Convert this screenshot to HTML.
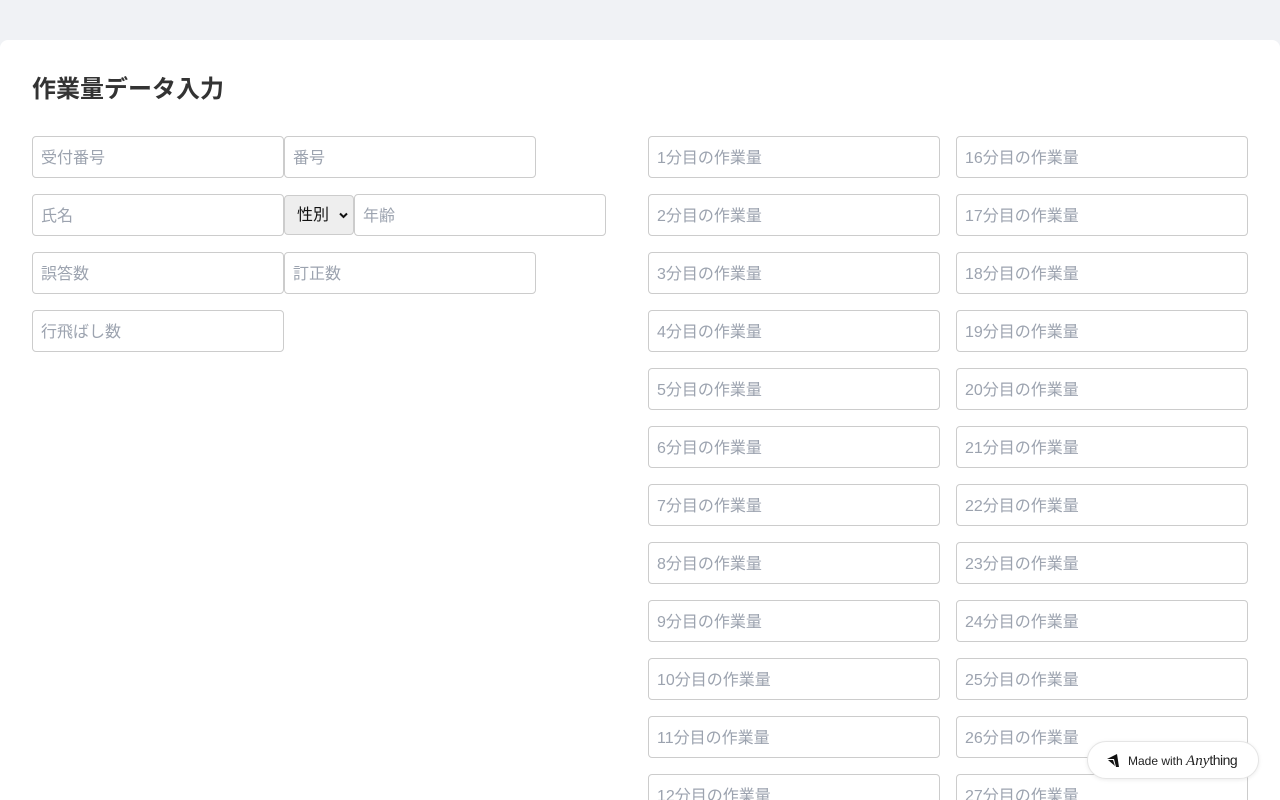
<!DOCTYPE html>
<html><head><meta charset="utf-8"><style>
html,body{margin:0;width:1280px;height:800px;overflow:hidden}
body{background:#f0f2f5;font-family:"Liberation Sans","Noto Sans CJK JP",sans-serif;position:relative}
.card{position:absolute;left:0;top:40px;width:1280px;height:760px;background:#fff;border-radius:8px 8px 0 0}
h1{position:absolute;left:32px;top:73px;margin:0;font-size:24px;font-weight:bold;color:#333;line-height:34px}
.i{position:absolute;box-sizing:border-box;height:42px;border:1px solid #ccc;border-radius:4px;background:#fff;font-size:16px;color:#9ca3af;padding-left:8px;line-height:44px;white-space:nowrap;overflow:hidden}
.s{position:absolute;left:284px;top:195px;width:70px;height:40px;box-sizing:border-box;border:1px solid #ccc;border-radius:4px;background:#eee;font-size:16px;color:#111;line-height:40px;padding-left:12px}
.badge{position:absolute;left:1087px;top:741px;width:172px;height:38px;box-sizing:border-box;border:1px solid #e5e5e5;border-radius:19px;background:#fff;box-shadow:0 1px 4px rgba(0,0,0,.08);font-size:12px;color:#222;line-height:36px}
</style></head><body>
<div class="card"></div>
<h1>作業量データ入力</h1>
<div class="i" style="left:32px;top:136px;width:252px">受付番号</div>
<div class="i" style="left:284px;top:136px;width:252px">番号</div>
<div class="i" style="left:32px;top:194px;width:252px">氏名</div>
<div class="s">性別<svg style="position:absolute;left:54px;top:16px" width="9" height="7" viewBox="0 0 9 7"><path d="M1 1.5 L4.5 5 L8 1.5" stroke="#111" stroke-width="2" fill="none"/></svg></div>
<div class="i" style="left:354px;top:194px;width:252px">年齢</div>
<div class="i" style="left:32px;top:252px;width:252px">誤答数</div>
<div class="i" style="left:284px;top:252px;width:252px">訂正数</div>
<div class="i" style="left:32px;top:310px;width:252px">行飛ばし数</div>
<div id="r"></div>
<script>
var h='';for(var k=0;k<12;k++){var y=136+58*k;
h+='<div class="i" style="left:648px;top:'+y+'px;width:292px">'+(k+1)+'分目の作業量</div>';
h+='<div class="i" style="left:956px;top:'+y+'px;width:292px">'+(k+16)+'分目の作業量</div>';}
document.getElementById('r').innerHTML=h;
</script>
<div class="badge"><svg style="position:absolute;left:18px;top:12px" width="14" height="13" viewBox="0 0 14 13"><path d="M1 5 L11 0 L13 13 L10 13 L8 5 Z" fill="#111"/><path d="M2 6 L7 6 L9 12 Z" fill="#111"/></svg><span style="position:absolute;left:40px">Made with <i style="font-family:'Liberation Serif',serif;font-size:15px">Any</i><span style="font-size:14px;letter-spacing:-.5px">thing</span></span></div>
</body></html>
